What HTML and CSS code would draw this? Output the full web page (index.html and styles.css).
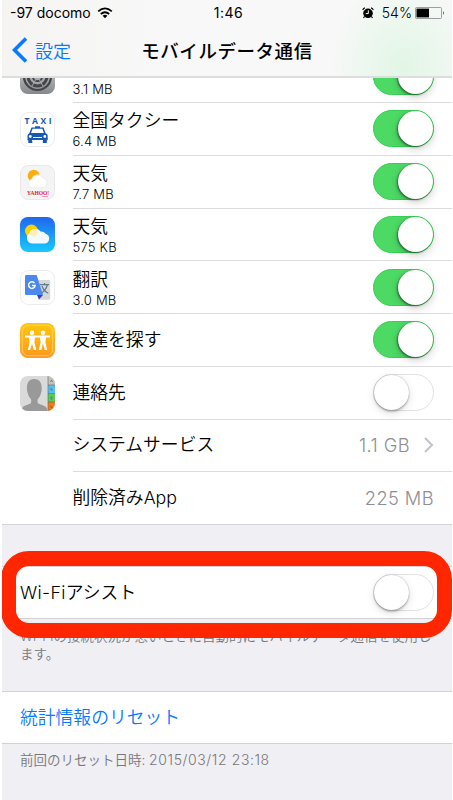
FILE: index.html
```html
<!DOCTYPE html>
<html lang="ja">
<head>
<meta charset="utf-8">
<title>モバイルデータ通信</title>
<link rel="stylesheet" href="styles.css">
</head>
<body>
<main class="screen">
  <header class="header">
    <div class="status">
      <div class="carrier"><span class="carrier-name">-97 docomo</span>
        <svg width="16" height="12" viewBox="0 0 16 12" fill="none" stroke="#000" stroke-width="1.8"><path d="M1.2 4.4Q8-1.6 14.8 4.4M3.8 7Q8 3.4 12.2 7"/><path d="M5.6 8.8Q8 6.9 10.4 8.8L8 11.3Z" fill="#000" stroke="none"/></svg>
      </div>
      <span class="time">1:46</span>
      <div class="power">
        <svg width="12" height="12" viewBox="0 0 12 12"><circle cx="6" cy="6.3" r="4.8"/><path d="M.8 3Q1.2 1.2 3 .8M9 .8Q10.8 1.2 11.2 3M2.5 9.5L1.5 11M9.5 9.5l1 1.5" stroke="#000" fill="none" stroke-width="1.2"/><path d="M6.3 3.3v3.3H3.8" fill="none" stroke="#fff"/></svg>
        <span class="percent">54%</span>
        <svg class="battery" width="30" height="12" viewBox="0 0 30 12"><rect x=".5" y=".5" width="26" height="11" rx="1" fill="none" stroke="#888" stroke-width=".8"/><rect x="1.5" y="1.6" width="12.5" height="8.8"/><path d="M28 4q1.4 2 0 4z"/></svg>
      </div>
    </div>
    <div class="nav">
      <div class="back"><svg width="16" height="26" viewBox="0 0 16 26"><path d="M14 1.5L2.5 13 14 24.5" fill="none" stroke="#087aff" stroke-width="3.6"/></svg><span>設定</span></div>
      <h1>モバイルデータ通信</h1>
    </div>
  </header>

  <section class="list">
    <div class="row clipped">
      <svg class="icon" viewBox="0 0 35 35"><defs><linearGradient id="gear" x2="0" y2="1"><stop stop-color="#ddd"/><stop offset="1" stop-color="#85878c"/></linearGradient></defs><rect width="35" height="35" rx="8" fill="url(#gear)"/><g fill="none" stroke="#444548"><circle cx="17.5" cy="17.5" r="13.5" stroke-width="2.2"/><circle cx="17.5" cy="17.5" r="9.4" stroke-width="3"/><circle cx="17.5" cy="17.5" r="4.7" stroke-width="1.8"/><path d="M17.5 17.5L12 27M17.5 17.5l5.5 9.5M17.5 17.5h11" stroke="#aaa"/></g></svg>
      <div class="cell"><div class="label"><span class="name"></span><span class="size">3.1 MB</span></div><i class="switch on"></i></div>
    </div>
    <div class="row">
      <svg class="icon" viewBox="0 0 35 35"><rect x=".5" y=".5" width="34" height="34" rx="8" fill="#fff" stroke="#ececec"/><text x="4.5" y="11.8" class="taxi" textLength="27">TAXI</text><path d="M15 16v-1.7h5V16zM11.5 15.5h12l2.2 5.7q2 .7 2 2.6v4.5H7.5v-4.5q0-2 1.8-2.6z" fill="#1559b4"/><path d="M12.6 16.8h9.8l1.5 4.2H11z" fill="#fff"/><path d="M8.3 28h4v3h-4zM22.8 28h4v3h-4z" fill="#1559b4"/><path d="M13 25.5h9M12 28.5h11" stroke="#fff"/><circle cx="10.3" cy="24.5" r="1.4" fill="#fff"/><circle cx="24.8" cy="24.5" r="1.4" fill="#fff"/></svg>
      <div class="cell"><div class="label"><span class="name">全国タクシー</span><span class="size">6.4 MB</span></div><i class="switch on"></i></div>
    </div>
    <div class="row">
      <svg class="icon" viewBox="0 0 35 35"><rect x=".5" y=".5" width="34" height="34" rx="8" fill="#f4f4f5" stroke="#e8e8e8"/><circle cx="13.7" cy="10.7" r="6" fill="#ffad0a"/><path d="M12.5 22.8a4.5 4.5 0 0 1-.7-8.8 6 6 0 0 1 11-1.2 5.1 5.1 0 0 1 0 10z" fill="#fff" stroke="#e4e4e4" stroke-width=".6"/><text x="7" y="30.3" class="yahoo" textLength="22" lengthAdjust="spacingAndGlyphs">YAHOO!</text><path d="M22 31.5h6" stroke="#eb8297" stroke-width=".8"/></svg>
      <div class="cell"><div class="label"><span class="name">天気</span><span class="size">7.7 MB</span></div><i class="switch on"></i></div>
    </div>
    <div class="row">
      <svg class="icon" viewBox="0 0 35 35"><defs><linearGradient id="sky" x2="0" y2="1"><stop stop-color="#2066ec"/><stop offset="1" stop-color="#18caff"/></linearGradient></defs><rect width="35" height="35" rx="8" fill="url(#sky)"/><circle cx="11.5" cy="14" r="6.5" fill="#ffd000"/><path d="M12.5 25.8a4.8 4.8 0 0 1-2.5-8.9 5.6 5.6 0 0 1 10.2-1.5 4.6 4.6 0 0 1 5 2 4.3 4.3 0 0 1-.4 8.4z" fill="#f3faff" stroke="#f3faff" stroke-width="1.5"/><path d="M10 16.9a5.6 5.6 0 0 1 8-4q.2 4-2.8 6.4-3.5 1-5.2-2.4z" fill="#ffeeb5"/></svg>
      <div class="cell"><div class="label"><span class="name">天気</span><span class="size">575 KB</span></div><i class="switch on"></i></div>
    </div>
    <div class="row">
      <svg class="icon" viewBox="0 0 35 35"><rect x=".5" y=".5" width="34" height="34" rx="8" fill="#fff" stroke="#ececec"/><path d="M17 10h12q1.2 0 1.2 1.2v17.3q0 1.2-1.2 1.2H19z" fill="#d6d7da"/><path d="M20 14.7h9M24.5 13v2M27.3 15q-1.5 5.5-6.3 8.5M22 16q1.5 5 6.3 7.3" fill="none" stroke="#607d8b" stroke-width="1.2"/><path d="M17 25h6l-4 4.5z" fill="#3546ad"/><path d="M6.3 5h10.4L23 25H6.3Q5 25 5 23.7V6.3Q5 5 6.3 5z" fill="#4b89ee"/><path d="M14.5 13a3.3 3.3 0 1 0 .7 2.5H12" fill="none" stroke="#fff" stroke-width="1.5"/></svg>
      <div class="cell"><div class="label"><span class="name">翻訳</span><span class="size">3.0 MB</span></div><i class="switch on"></i></div>
    </div>
    <div class="row">
      <svg class="icon" viewBox="0 0 35 35"><defs><linearGradient id="orange" x2="0" y2="1"><stop stop-color="#ffc80c"/><stop offset="1" stop-color="#ff981f"/></linearGradient></defs><rect width="35" height="35" rx="8" fill="url(#orange)"/><rect x="2.3" y="2.3" width="30.4" height="30.4" rx="6" fill="none" stroke="#ffda83" stroke-width=".7"/><g fill="#fff"><circle cx="12" cy="9.7" r="2.2"/><circle cx="23" cy="9.7" r="2.2"/><path d="M5 12.5h25v2h-4l-.6 5 1.8 7.5h-2.4L23 20.5 21.2 27h-2.4l1.8-7.5-.6-5h-5l-.6 5 1.8 7.5h-2.4L12 20.5 10.2 27H7.8l1.8-7.5-.6-5H5z"/></g></svg>
      <div class="cell"><span class="name">友達を探す</span><i class="switch on"></i></div>
    </div>
    <div class="row">
      <svg class="icon" viewBox="0 0 35 35"><defs><clipPath id="round"><rect width="35" height="35" rx="8"/></clipPath></defs><g clip-path="url(#round)"><path fill="#dadada" d="M0 0h35v35H0z"/><path fill="#c1c1bd" d="M28 0h7v9h-7z"/><path fill="#56bef4" d="M28 9h7v8.5h-7z"/><path fill="#55cc59" d="M28 17.5h7V26h-7z"/><path fill="#f37a15" d="M28 26h7v9h-7z"/><path d="M28 0v35M28 9h7M28 17.5h7M28 26h7" stroke="#666" stroke-width=".6"/><path d="M1.5 35q0-4.5 4-5.6l5-2q1.2-.8.6-4-3.2-3.7-4-8.5Q5.8 3 14.2 3t7.4 11.9q-.8 5-4 8.5-.6 3.2.6 4l5 2q4.2 1 4.2 5.6z" fill="#999"/><path d="M30.5 6l1-2 1 2M31 12v2h1.5M32.5 21H31v2h1.5M31 29.5v2h1.3" fill="none" stroke="#555" stroke-width=".6"/></g></svg>
      <div class="cell"><span class="name">連絡先</span><i class="switch"></i></div>
    </div>
    <div class="row no-icon">
      <div class="cell"><span class="name">システムサービス</span><span class="value">1.1 GB<svg width="10" height="16" viewBox="0 0 10 16"><path d="M1 1l7 7-7 7" fill="none" stroke="#c2c2c9" stroke-width="2"/></svg></span></div>
    </div>
    <div class="row no-icon last">
      <div class="cell"><span class="name">削除済みApp</span><span class="value">225 MB</span></div>
    </div>
  </section>

  <section class="assist">
    <div class="plain-row"><span class="name"><span class="latin">Wi-Fi</span>アシスト</span><i class="switch"></i></div>
    <p class="note">Wi-Fiの接続状況が悪いときに自動的にモバイルデータ通信を使用します。</p>
    <div class="highlight"></div>
  </section>

  <section class="reset">
    <div class="plain-row"><span class="name link">統計情報のリセット</span></div>
    <p class="note">前回のリセット日時: <span class="date">2015/03/12 23:18</span></p>
  </section>
</main>
</body>
</html>
```

FILE: styles.css
```css
* { box-sizing: border-box; }
body {
  margin: 0;
  background: #fff;
  color: #000;
  font-family: Inter, "Noto Sans CJK JP", sans-serif;
  font-weight: 350;
}
.screen {
  width: 450px;
  height: 800px;
  margin-left: 2px;
  overflow: hidden;
  background: #efeff4;
}
.header {
  height: 78px;
  border-bottom: 2px solid #dcdddd;
  background:
    radial-gradient(ellipse 75px 90px at 402px 66px, #e1f6e5, transparent),
    linear-gradient(90deg, #f5f4f2, #f8f8f8 35%);
}
.status {
  display: grid;
  grid-template-columns: 1fr auto 1fr;
  align-items: center;
  height: 25px;
  padding: 0 7px 0 8px;
  font-size: 14px;
  font-weight: 400;
}
.carrier, .power { display: flex; align-items: center; }
.carrier { gap: 6px; }
.time { letter-spacing: .5px; padding-left: 2px; }
.power { justify-content: flex-end; }
.power > svg:first-child { margin-right: 1px; }
.percent { margin: 0 3px 0 7px; font-weight: 350; }
.nav {
  display: grid;
  grid-template-columns: 1fr auto 1fr;
  align-items: center;
  height: 49px;
  padding-left: 10px;
  padding-right: 10px;
}
.back {
  display: flex;
  align-items: center;
  gap: 7px;
  color: #087aff;
  font-size: 18px;
}
h1 {
  margin: 0;
  font-size: 18.5px;
  font-weight: 500;
  letter-spacing: .55px;
}
.list { background: #fff; border-bottom: 1px solid #d4d4d8; }
.row {
  display: flex;
  align-items: center;
  height: 52.75px;
  padding-left: 18px;
}
.clipped { height: 25px; align-items: flex-end; overflow: hidden; }
.clipped .icon { margin-bottom: 9.5px; }
.clipped .cell { height: 52.75px; }
.clipped .name { height: 24px; }
.icon { width: 35px; height: 35px; flex: none; margin-right: 17.5px; }
.no-icon { padding-left: 70.5px; }
.cell {
  flex: 1;
  display: flex;
  align-items: center;
  justify-content: space-between;
  height: 100%;
  padding-right: 18px;
  border-bottom: 1px solid #dcdcdf;
}
.last { height: 52px; }
.last .cell { border-bottom: 0; }
.label { display: flex; flex-direction: column; padding-top: 1px; }
.name { font-size: 17.8px; line-height: 24px; }
.size { font-size: 13px; line-height: 16px; letter-spacing: .2px; }
.value {
  display: flex;
  align-items: center;
  gap: 14px;
  color: #8e8e93;
  font-size: 18.3px;
  letter-spacing: .4px;
}
.latin { letter-spacing: .35px; }
.switch {
  width: 61px;
  height: 37px;
  padding: 1px;
  border: 1.5px solid #e2e2e4;
  border-radius: 19px;
  background: #fff;
}
.switch::before {
  content: "";
  display: block;
  width: 35px;
  height: 35px;
  margin-top: -1px;
  margin-left: -1px;
  border-radius: 50%;
  background: #fff;
  box-shadow: 0 0 1px #0006, 0 2px 2px #0003, 0 3px 8px #0002;
}
.switch.on { border-color: #35d052; background: #4cd964; }
.switch.on::before { margin-left: 23px; box-shadow: -1px 1px 2px #0007, 0 3px 8px #0003; }
.assist {
  position: relative;
  height: 166px;
  padding-top: 41px;
}
.plain-row {
  display: flex;
  align-items: center;
  justify-content: space-between;
  height: 53px;
  padding: 0 18px;
  border-top: 1px solid #d1d1d6;
  border-bottom: 1px solid #d1d1d6;
  background: #fff;
}
.link { color: #087aff; }
.note {
  margin: 8px 15px 0 18px;
  color: #77777c;
  font-size: 13.5px;
  line-height: 18px;
}
.reset .note { margin-top: 7px; }
.date { font-size: 14px; letter-spacing: .6px; }
.highlight {
  position: absolute;
  top: 25.5px;
  left: -1px;
  width: 451px;
  height: 87px;
  border: 15px solid #ff2600;
  border-radius: 28px;
}
.taxi { font: 700 8.5px "Open Sans", sans-serif; fill: #1559b4; }
.yahoo { font: 700 6.5px "Liberation Serif", serif; fill: #e5173f; }
```
